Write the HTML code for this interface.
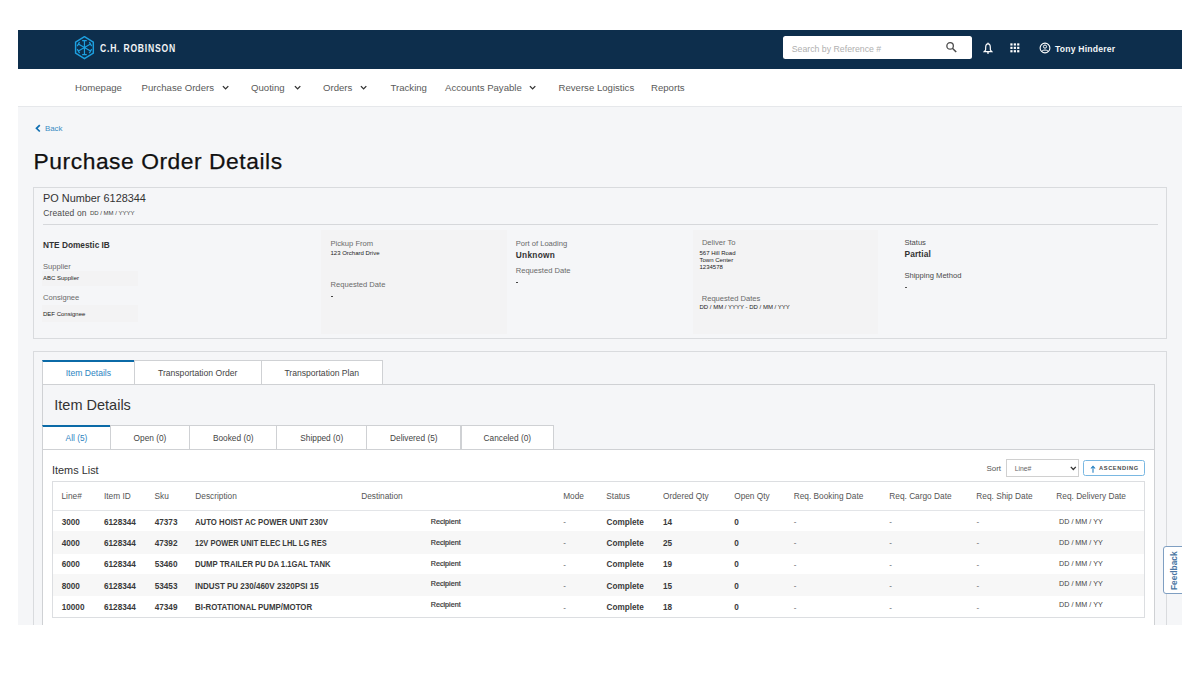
<!DOCTYPE html>
<html><head><meta charset="utf-8">
<style>
*{box-sizing:border-box;margin:0;padding:0}
html,body{width:1200px;height:675px;overflow:hidden;background:#fff}
body{position:relative;font-family:"Liberation Sans",sans-serif;color:#333}
.a{position:absolute;white-space:nowrap}
#hdr{left:18px;top:30px;width:1164px;height:39px;background:#0d2e4c}
#nav{left:18px;top:69px;width:1164px;height:37px;background:#fff}
#main{left:18px;top:106px;width:1164px;height:519px;background:#f5f6f8;border-top:1px solid #e6e8eb}
.nv{font-size:9.6px;color:#5a5a5a;top:82px}
.chev{position:absolute;width:8px;height:6px}
.lbl{font-size:7.6px;color:#6a6a6a}
.val{font-size:6px;color:#222}
.panel{background:#f3f3f4}
.tab{position:absolute;background:#fff;border:1px solid #cfd1d4;border-bottom:none;font-size:8.2px;color:#444;text-align:center}
.tab.act{border-top:2px solid #0b6aa7;color:#2b82bd}
.th{font-size:8.3px;color:#555;top:490.8px}
.dash{font-size:8px;color:#555}
.dd{font-size:7.2px;color:#444}
.td{font-size:8.2px;font-weight:bold;color:#3a3a3a}
.rc{font-size:7.2px;color:#333;-webkit-text-stroke:0.2px #333}
</style></head><body>

<!-- header -->
<div class="a" id="hdr"></div>
<svg class="a" style="left:74px;top:36px" width="21" height="24" viewBox="0 0 21 24"><polygon points="10.45,0.60 19.31,6.10 19.31,17.10 10.45,22.60 1.59,17.10 1.59,6.10" fill="none" stroke="#1da0e0" stroke-width="1.45"/><path d="M10.45 11.60L10.45 4.60M8.15 4.60L12.75 4.60M10.45 11.60L16.51 8.10M15.36 6.11L17.66 10.09M10.45 11.60L16.51 15.10M17.66 13.11L15.36 17.09M10.45 11.60L10.45 18.60M12.75 18.60L8.15 18.60M10.45 11.60L4.39 15.10M5.54 17.09L3.24 13.11M10.45 11.60L4.39 8.10M3.24 10.09L5.54 6.11" fill="none" stroke="#1da0e0" stroke-width="1.2"/></svg>
<div class="a" style="left:99.6px;top:42px;font-size:11px;font-weight:bold;color:#f2f4f6;letter-spacing:1px;transform:scaleX(0.78);transform-origin:left top">C.H. ROBINSON</div>

<div class="a" style="left:783px;top:36.3px;width:189px;height:23.2px;background:#fff;border-radius:2.5px"></div>
<div class="a" style="left:791.7px;top:43.5px;font-size:8.75px;color:#b0b0b0">Search by Reference #</div>
<svg class="a" style="left:945.6px;top:42.4px" width="12" height="11" viewBox="0 0 12 11"><circle cx="4.1" cy="3.9" r="3.25" fill="none" stroke="#4a4a4a" stroke-width="1.3"/><line x1="6.4" y1="6.2" x2="10.2" y2="10" stroke="#4a4a4a" stroke-width="1.5"/></svg>
<svg class="a" style="left:983px;top:42px" width="10" height="12" viewBox="0 0 10 12"><path d="M5 1.9 C3.3 1.9 2.7 3.4 2.7 5.2 L2.6 8.1 L1.1 9.7 L8.9 9.7 L7.4 8.1 L7.3 5.2 C7.3 3.4 6.7 1.9 5 1.9Z" fill="none" stroke="#fff" stroke-width="1.2"/><circle cx="5" cy="1.2" r="0.7" fill="#fff"/><circle cx="5" cy="10.9" r="0.9" fill="#fff"/></svg>
<svg class="a" style="left:1010.4px;top:43.3px" width="10" height="10" viewBox="0 0 10 10" fill="#fff"><rect x="0.35" y="0.35" width="2.2" height="2.2"/><rect x="3.75" y="0.35" width="2.2" height="2.2"/><rect x="7.15" y="0.35" width="2.2" height="2.2"/><rect x="0.35" y="3.75" width="2.2" height="2.2"/><rect x="3.75" y="3.75" width="2.2" height="2.2"/><rect x="7.15" y="3.75" width="2.2" height="2.2"/><rect x="0.35" y="7.15" width="2.2" height="2.2"/><rect x="3.75" y="7.15" width="2.2" height="2.2"/><rect x="7.15" y="7.15" width="2.2" height="2.2"/></svg>
<svg class="a" style="left:1038.5px;top:42px" width="12" height="12" viewBox="0 0 12 12"><circle cx="6" cy="6" r="4.9" fill="none" stroke="#fff" stroke-width="1.1"/><circle cx="6" cy="4.6" r="1.6" fill="none" stroke="#fff" stroke-width="1"/><path d="M3 9.2 C4 7.6 8 7.6 9 9.2" fill="none" stroke="#fff" stroke-width="1"/></svg>
<div class="a" style="left:1054.9px;top:43.6px;font-size:8.6px;font-weight:bold;color:#f4f6f8;letter-spacing:0.22px">Tony Hinderer</div>

<!-- nav -->
<div class="a nv" style="left:75px">Homepage</div>
<div class="a nv" style="left:141.5px">Purchase Orders</div>
<div class="a nv" style="left:251px">Quoting</div>
<div class="a nv" style="left:323px">Orders</div>
<div class="a nv" style="left:390.5px">Tracking</div>
<div class="a nv" style="left:445px">Accounts Payable</div>
<div class="a nv" style="left:558.5px">Reverse Logistics</div>
<div class="a nv" style="left:651px">Reports</div>
<svg class="chev" style="left:221.7px;top:84.6px" viewBox="0 0 8 6"><path d="M0.9 1.1 L3.6 3.9 L6.3 1.1" fill="none" stroke="#333" stroke-width="1.35"/></svg>
<svg class="chev" style="left:294.2px;top:84.6px" viewBox="0 0 8 6"><path d="M0.9 1.1 L3.6 3.9 L6.3 1.1" fill="none" stroke="#333" stroke-width="1.35"/></svg>
<svg class="chev" style="left:360.2px;top:84.6px" viewBox="0 0 8 6"><path d="M0.9 1.1 L3.6 3.9 L6.3 1.1" fill="none" stroke="#333" stroke-width="1.35"/></svg>
<svg class="chev" style="left:529.2px;top:84.6px" viewBox="0 0 8 6"><path d="M0.9 1.1 L3.6 3.9 L6.3 1.1" fill="none" stroke="#333" stroke-width="1.35"/></svg>

<!-- main -->
<div class="a" id="main"></div>
<svg class="a" style="left:35px;top:123.6px" width="6" height="9" viewBox="0 0 6 9"><path d="M4.8 1.1 L1.5 4.3 L4.8 7.5" fill="none" stroke="#106fb2" stroke-width="1.7"/></svg>
<div class="a" style="left:44.9px;top:123.6px;font-size:7.9px;color:#3a8dc4">Back</div>
<div class="a" style="left:33.6px;top:147.8px;font-size:22.8px;letter-spacing:0.55px;color:#111;-webkit-text-stroke:0.25px #111">Purchase Order Details</div>

<!-- PO card -->
<div class="a" style="left:33px;top:187px;width:1134px;height:152px;border:1px solid #d9dbde"></div>
<div class="a" style="left:43px;top:192px;font-size:10.9px;color:#333">PO Number 6128344</div>
<div class="a" style="left:43.2px;top:207.7px;font-size:8.5px;letter-spacing:0.15px;color:#4a4a4a">Created on</div>
<div class="a" style="left:89.9px;top:210px;font-size:6px;color:#444">DD / MM / YYYY</div>
<div class="a" style="left:42.5px;top:224px;width:1115px;height:1px;background:#d6d8db"></div>

<div class="a" style="left:43px;top:240px;font-size:8.3px;font-weight:bold;color:#333">NTE Domestic IB</div>
<div class="a lbl" style="left:43px;top:262px">Supplier</div>
<div class="a panel" style="left:42px;top:271px;width:96px;height:15px"></div>
<div class="a val" style="left:43px;top:274.8px">ABC Supplier</div>
<div class="a lbl" style="left:43px;top:293.3px">Consignee</div>
<div class="a panel" style="left:42px;top:305px;width:96px;height:17px"></div>
<div class="a val" style="left:43px;top:310.8px">DEF Consignee</div>

<div class="a panel" style="left:321px;top:230px;width:186px;height:104px"></div>
<div class="a lbl" style="left:330.5px;top:238.5px">Pickup From</div>
<div class="a val" style="left:330.5px;top:249.5px">123 Orchard Drive</div>
<div class="a lbl" style="left:330.5px;top:280px">Requested Date</div>
<div class="a" style="left:330.8px;top:296px;width:2.2px;height:1px;background:#444"></div>

<div class="a lbl" style="left:515.7px;top:238.5px">Port of Loading</div>
<div class="a" style="left:515.8px;top:249.6px;font-size:8.3px;font-weight:bold;color:#333;letter-spacing:0.3px">Unknown</div>
<div class="a lbl" style="left:515.7px;top:266px">Requested Date</div>
<div class="a" style="left:516.2px;top:282.2px;width:2.2px;height:1px;background:#444"></div>

<div class="a panel" style="left:692.5px;top:230px;width:185px;height:104px"></div>
<div class="a lbl" style="left:701.9px;top:238px">Deliver To</div>
<div class="a val" style="left:699.5px;top:249.5px;line-height:7.1px">567 Hill Road<br>Town Center<br>1234578</div>
<div class="a lbl" style="left:701.7px;top:294px">Requested Dates</div>
<div class="a val" style="left:699.5px;top:303.5px">DD / MM / YYYY - DD / MM / YYY</div>

<div class="a lbl" style="left:904.4px;top:237.8px;color:#4a4a4a">Status</div>
<div class="a" style="left:904.4px;top:249.3px;font-size:8.4px;font-weight:bold;color:#333;letter-spacing:0.15px">Partial</div>
<div class="a lbl" style="left:904.4px;top:271px;color:#4a4a4a">Shipping Method</div>
<div class="a" style="left:904.6px;top:286.6px;width:2px;height:1px;background:#555"></div>

<!-- section -->
<div class="a" style="left:32.8px;top:350.8px;width:1134px;height:300px;border:1px solid #d9dbde"></div>
<div class="a" style="left:42px;top:383.5px;width:1112.8px;height:300px;border:1px solid #cfd1d4;background:#f5f6f8"></div>
<div class="a" style="left:42.0px;top:360.2px;width:92.8px;height:23.8px;background:#fff;border:1px solid #cfd1d4;border-top:2px solid #0b6aa7;border-bottom:none"></div>
<div class="a" style="left:42.0px;top:367.78px;width:92.8px;text-align:center;font-size:8.6px;color:#2c84bf">Item Details</div>
<div class="a" style="left:133.8px;top:360.2px;width:127.8px;height:23.8px;background:#fff;border:1px solid #cfd1d4;border-bottom:none"></div>
<div class="a" style="left:133.8px;top:367.78px;width:127.8px;text-align:center;font-size:8.6px;color:#444">Transportation Order</div>
<div class="a" style="left:260.6px;top:360.2px;width:122.3px;height:23.8px;background:#fff;border:1px solid #cfd1d4;border-bottom:none"></div>
<div class="a" style="left:260.6px;top:367.78px;width:122.3px;text-align:center;font-size:8.6px;color:#444">Transportation Plan</div>
<div class="a" style="left:54.3px;top:396.6px;font-size:14.5px;color:#333">Item Details</div>

<div class="a" style="left:43px;top:449px;width:1110.8px;height:200px;background:#fff;border-top:1px solid #cfd1d4"></div>
<div class="a" style="left:42.0px;top:425.2px;width:68.9px;height:23.8px;background:#fff;border:1px solid #cfd1d4;border-top:2px solid #0b6aa7;border-bottom:none"></div>
<div class="a" style="left:42.0px;top:433.26px;width:68.9px;text-align:center;font-size:8.3px;color:#2c84bf">All (5)</div>
<div class="a" style="left:109.9px;top:425.2px;width:80.2px;height:23.8px;background:#fff;border:1px solid #cfd1d4;border-bottom:none"></div>
<div class="a" style="left:109.9px;top:433.26px;width:80.2px;text-align:center;font-size:8.3px;color:#444">Open (0)</div>
<div class="a" style="left:189.1px;top:425.2px;width:88.3px;height:23.8px;background:#fff;border:1px solid #cfd1d4;border-bottom:none"></div>
<div class="a" style="left:189.1px;top:433.26px;width:88.3px;text-align:center;font-size:8.3px;color:#444">Booked (0)</div>
<div class="a" style="left:276.4px;top:425.2px;width:90.7px;height:23.8px;background:#fff;border:1px solid #cfd1d4;border-bottom:none"></div>
<div class="a" style="left:276.4px;top:433.26px;width:90.7px;text-align:center;font-size:8.3px;color:#444">Shipped (0)</div>
<div class="a" style="left:366.1px;top:425.2px;width:95.4px;height:23.8px;background:#fff;border:1px solid #cfd1d4;border-bottom:none"></div>
<div class="a" style="left:366.1px;top:433.26px;width:95.4px;text-align:center;font-size:8.3px;color:#444">Delivered (5)</div>
<div class="a" style="left:460.5px;top:425.2px;width:93.6px;height:23.8px;background:#fff;border:1px solid #cfd1d4;border-bottom:none"></div>
<div class="a" style="left:460.5px;top:433.26px;width:93.6px;text-align:center;font-size:8.3px;color:#444">Canceled (0)</div>

<div class="a" style="left:52px;top:463.7px;font-size:10.9px;color:#333">Items List</div>
<div class="a" style="left:986.4px;top:464px;font-size:8px;color:#555">Sort</div>
<div class="a" style="left:1006px;top:459px;width:73px;height:17.5px;border:1px solid #d0d0d0;background:#fff"></div>
<div class="a" style="left:1014.7px;top:464.5px;font-size:6.8px;color:#666">Line#</div>
<svg class="a" style="left:1069.8px;top:466.2px" width="7" height="5" viewBox="0 0 7 5"><path d="M0.8 0.9 L3.3 3.5 L5.8 0.9" fill="none" stroke="#333" stroke-width="1.3"/></svg>
<div class="a" style="left:1083px;top:460px;width:61.5px;height:15.5px;border:1.2px solid #7ab8e2;border-radius:2.5px;background:#fff"></div>
<svg class="a" style="left:1090px;top:465px" width="6" height="8" viewBox="0 0 6 8"><path d="M3 7.8 L3 1.4 M0.9 3.5 L3 1.2 L5.1 3.5" fill="none" stroke="#1f7cbf" stroke-width="1.05"/></svg>
<div class="a" style="left:1099px;top:465.2px;font-size:5.7px;font-weight:bold;color:#4a4a4a;letter-spacing:0.62px">ASCENDING</div>

<!-- table -->
<div class="a" style="left:52px;top:481px;width:1093px;height:137px;border:1px solid #dcdee1;background:#fff"></div>
<div class="a" style="left:53px;top:510px;width:1091px;height:1px;background:#e3e5e8"></div>
<div class="a" style="left:53px;top:531.3px;width:1091px;height:22.4px;background:#f7f7f7"></div>
<div class="a" style="left:53px;top:574px;width:1091px;height:22px;background:#f7f7f7"></div>

<div class="a th" style="left:61.5px">Line#</div>
<div class="a th" style="left:104px">Item ID</div>
<div class="a th" style="left:154.5px">Sku</div>
<div class="a th" style="left:195.3px">Description</div>
<div class="a th" style="left:361.2px">Destination</div>
<div class="a th" style="left:563.2px">Mode</div>
<div class="a th" style="left:606.3px">Status</div>
<div class="a th" style="left:663px">Ordered Qty</div>
<div class="a th" style="left:734.2px">Open Qty</div>
<div class="a th" style="left:793.7px">Req. Booking Date</div>
<div class="a th" style="left:889.3px">Req. Cargo Date</div>
<div class="a th" style="left:976.3px">Req. Ship Date</div>
<div class="a th" style="left:1056.3px">Req. Delivery Date</div>

<div id="rows"><div class="a td" style="left:61.7px;top:517.65px">3000</div>
<div class="a td" style="left:104px;top:517.65px">6128344</div>
<div class="a td" style="left:154.7px;top:517.65px">47373</div>
<div class="a td" style="left:195.3px;top:516.96px;font-size:8.4px;transform:scaleX(0.928);transform-origin:left top">AUTO HOIST AC POWER UNIT 230V</div>
<div class="a rc" style="left:430.7px;top:517.27px">Recipient</div>
<div class="a dash" style="left:563.3px;top:517.33px">-</div>
<div class="a td" style="left:606.5px;top:517.65px">Complete</div>
<div class="a td" style="left:663px;top:517.65px">14</div>
<div class="a td" style="left:734.2px;top:517.65px">0</div>
<div class="a dash" style="left:793.7px;top:517.33px">-</div>
<div class="a dash" style="left:889.3px;top:517.33px">-</div>
<div class="a dash" style="left:976.4px;top:517.33px">-</div>
<div class="a dd" style="left:1059px;top:517.27px">DD / MM / YY</div>
<div class="a td" style="left:61.7px;top:538.65px">4000</div>
<div class="a td" style="left:104px;top:538.65px">6128344</div>
<div class="a td" style="left:154.7px;top:538.65px">47392</div>
<div class="a td" style="left:195.3px;top:537.96px;font-size:8.4px;transform:scaleX(0.894);transform-origin:left top">12V POWER UNIT ELEC LHL LG RES</div>
<div class="a rc" style="left:430.7px;top:538.37px">Recipient</div>
<div class="a dash" style="left:563.3px;top:538.33px">-</div>
<div class="a td" style="left:606.5px;top:538.65px">Complete</div>
<div class="a td" style="left:663px;top:538.65px">25</div>
<div class="a td" style="left:734.2px;top:538.65px">0</div>
<div class="a dash" style="left:793.7px;top:538.33px">-</div>
<div class="a dash" style="left:889.3px;top:538.33px">-</div>
<div class="a dash" style="left:976.4px;top:538.33px">-</div>
<div class="a dd" style="left:1059px;top:538.37px">DD / MM / YY</div>
<div class="a td" style="left:61.7px;top:559.95px">6000</div>
<div class="a td" style="left:104px;top:559.95px">6128344</div>
<div class="a td" style="left:154.7px;top:559.95px">53460</div>
<div class="a td" style="left:195.3px;top:559.26px;font-size:8.4px;transform:scaleX(0.918);transform-origin:left top">DUMP TRAILER PU DA 1.1GAL TANK</div>
<div class="a rc" style="left:430.7px;top:559.47px">Recipient</div>
<div class="a dash" style="left:563.3px;top:559.63px">-</div>
<div class="a td" style="left:606.5px;top:559.95px">Complete</div>
<div class="a td" style="left:663px;top:559.95px">19</div>
<div class="a td" style="left:734.2px;top:559.95px">0</div>
<div class="a dash" style="left:793.7px;top:559.63px">-</div>
<div class="a dash" style="left:889.3px;top:559.63px">-</div>
<div class="a dash" style="left:976.4px;top:559.63px">-</div>
<div class="a dd" style="left:1059px;top:559.47px">DD / MM / YY</div>
<div class="a td" style="left:61.7px;top:581.65px">8000</div>
<div class="a td" style="left:104px;top:581.65px">6128344</div>
<div class="a td" style="left:154.7px;top:581.65px">53453</div>
<div class="a td" style="left:195.3px;top:580.96px;font-size:8.4px;transform:scaleX(0.956);transform-origin:left top">INDUST PU 230/460V 2320PSI 15</div>
<div class="a rc" style="left:430.7px;top:579.12px">Recipient</div>
<div class="a dash" style="left:563.3px;top:581.33px">-</div>
<div class="a td" style="left:606.5px;top:581.65px">Complete</div>
<div class="a td" style="left:663px;top:581.65px">15</div>
<div class="a td" style="left:734.2px;top:581.65px">0</div>
<div class="a dash" style="left:793.7px;top:581.33px">-</div>
<div class="a dash" style="left:889.3px;top:581.33px">-</div>
<div class="a dash" style="left:976.4px;top:581.33px">-</div>
<div class="a dd" style="left:1059px;top:579.12px">DD / MM / YY</div>
<div class="a td" style="left:61.7px;top:602.95px">10000</div>
<div class="a td" style="left:104px;top:602.95px">6128344</div>
<div class="a td" style="left:154.7px;top:602.95px">47349</div>
<div class="a td" style="left:195.3px;top:602.26px;font-size:8.4px;transform:scaleX(0.941);transform-origin:left top">BI-ROTATIONAL PUMP/MOTOR</div>
<div class="a rc" style="left:430.7px;top:600.37px">Recipient</div>
<div class="a dash" style="left:563.3px;top:602.63px">-</div>
<div class="a td" style="left:606.5px;top:602.95px">Complete</div>
<div class="a td" style="left:663px;top:602.95px">18</div>
<div class="a td" style="left:734.2px;top:602.95px">0</div>
<div class="a dash" style="left:793.7px;top:602.63px">-</div>
<div class="a dash" style="left:889.3px;top:602.63px">-</div>
<div class="a dash" style="left:976.4px;top:602.63px">-</div>
<div class="a dd" style="left:1059px;top:600.37px">DD / MM / YY</div></div><!--/rows-->

<!-- feedback -->
<div class="a" style="left:1163px;top:546px;width:22px;height:48px;border:1px solid #7f9fc2;border-radius:3px;background:#fff"></div>
<div class="a" style="left:1169px;top:589.5px;font-size:8.4px;font-weight:bold;color:#4a76a3;transform:rotate(-90deg);transform-origin:left top">Feedback</div>
<div class="a" style="left:1182px;top:0;width:18px;height:675px;background:#fff"></div>
<div class="a" style="left:0;top:624.5px;width:1200px;height:51px;background:#fff"></div>
</body></html>
